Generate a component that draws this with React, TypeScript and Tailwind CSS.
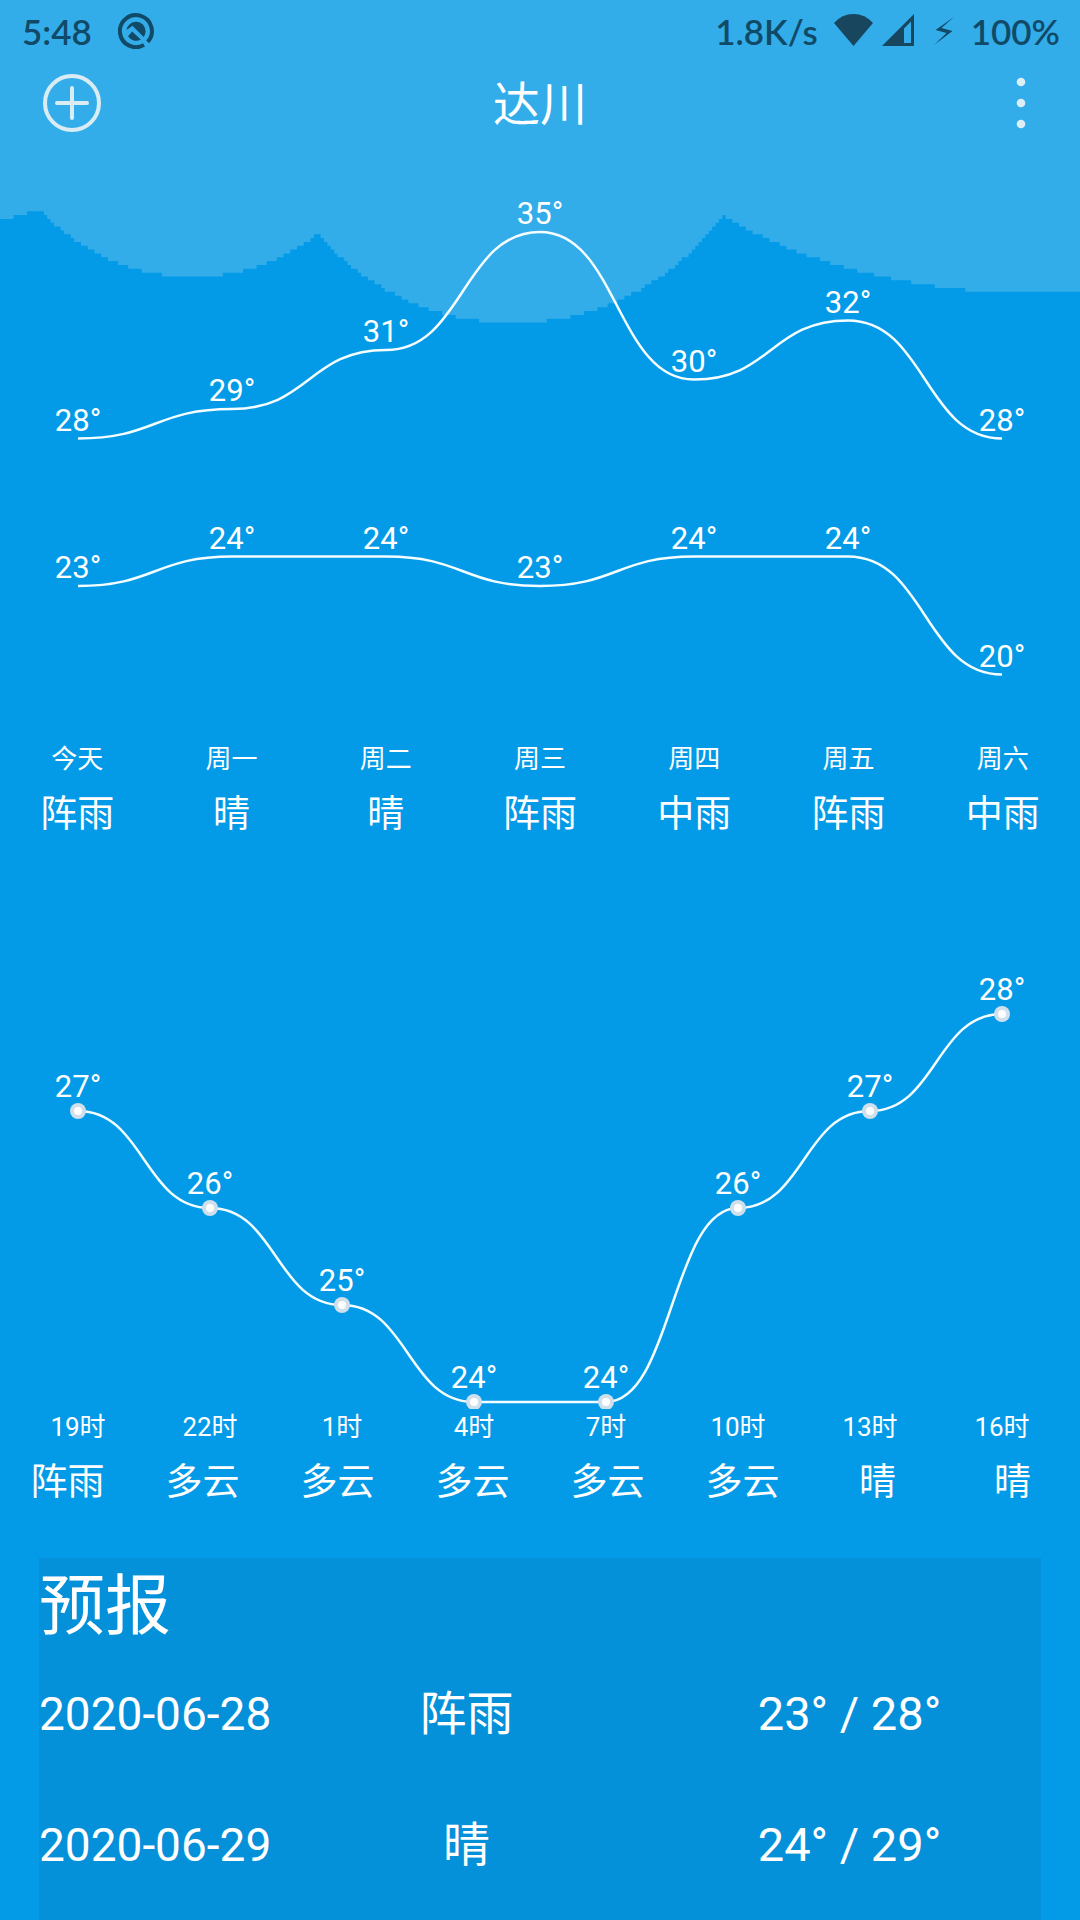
import React from "react";

type Day = { label: string; condition: string; high: number; low: number };
type Hour = { label: string; condition: string; temp: number };
type Point = { x: number; y: number; value: number };

const days: Day[] = [
  { label: "今天", condition: "阵雨", high: 28, low: 23 },
  { label: "周一", condition: "晴", high: 29, low: 24 },
  { label: "周二", condition: "晴", high: 31, low: 24 },
  { label: "周三", condition: "阵雨", high: 35, low: 23 },
  { label: "周四", condition: "中雨", high: 30, low: 24 },
  { label: "周五", condition: "阵雨", high: 32, low: 24 },
  { label: "周六", condition: "中雨", high: 28, low: 20 },
];

const hours: Hour[] = [
  { label: "19时", condition: "阵雨", temp: 27 },
  { label: "22时", condition: "多云", temp: 26 },
  { label: "1时", condition: "多云", temp: 25 },
  { label: "4时", condition: "多云", temp: 24 },
  { label: "7时", condition: "多云", temp: 24 },
  { label: "10时", condition: "多云", temp: 26 },
  { label: "13时", condition: "晴", temp: 27 },
  { label: "16时", condition: "晴", temp: 28 },
];

const forecast = [
  { date: "2020-06-28", condition: "阵雨", range: "23° / 28°" },
  { date: "2020-06-29", condition: "晴", range: "24° / 29°" },
];

/* ---- Cloud backdrop: lower edge sampled on a coarse 320-column grid ---- */

function cloudEdge(x: number): number {
  if (x < 42) return x < 14 ? 219 : x < 27 ? 215 : 211;
  if (x < 319) return 73 + Math.sqrt(204 * 204 - (x - 192) ** 2);
  if (x < 724) return 64 + Math.sqrt(259 * 259 - (x - 513) ** 2);
  const knots = [
    [724, 215], [746, 229], [783, 246], [826, 262], [870, 274],
    [911, 282], [941, 287], [982, 292], [1080, 292],
  ];
  for (let i = 1; i < knots.length; i++) {
    const [x0, y0] = knots[i - 1];
    const [x1, y1] = knots[i];
    if (x <= x1) return y0 + ((y1 - y0) * (x - x0)) / (x1 - x0);
  }
  return 292;
}

function cloudPath(): string {
  let d = "M0 0";
  for (let c = 0; c < 320; c++) {
    const y = Math.round(cloudEdge((c + 0.5) * 3.375) / 3.84);
    d += `V${y}H${c + 1}`;
  }
  return d + "V0Z";
}

function Cloud() {
  return (
    <svg
      className="absolute inset-x-0 top-0 h-96 w-full"
      viewBox="0 0 320 100"
      preserveAspectRatio="none"
      aria-hidden="true"
    >
      <path d={cloudPath()} fill="#33adea" />
    </svg>
  );
}

/* ---- Charts ---- */

function smooth(points: Point[]): string {
  return points
    .map((p, i) => {
      if (i === 0) return `M${p.x} ${p.y}`;
      const q = points[i - 1];
      const mid = (p.x + q.x) / 2;
      return `C${mid} ${q.y} ${mid} ${p.y} ${p.x} ${p.y}`;
    })
    .join("");
}

function Series({ points, dots, gap }: { points: Point[]; dots?: boolean; gap: number }) {
  return (
    <g>
      <path d={smooth(points)} fill="none" stroke="#f4fdff" strokeWidth="2.5" />
      {points.map((p) => (
        <g key={p.x}>
          {dots && <circle cx={p.x} cy={p.y} r="8" fill="#cfdfeb" />}
          {dots && <circle cx={p.x} cy={p.y} r="4" fill="#ffffff" />}
          <text x={p.x} y={p.y - gap} textAnchor="middle" className="fill-white text-[31px]">
            {p.value}°
          </text>
        </g>
      ))}
    </g>
  );
}

function DailyChart() {
  const plot = (key: "high" | "low") =>
    days.map((d, i) => ({ x: 78 + i * 154, y: 86 + (35 - d[key]) * 29.5, value: d[key] }));
  return (
    <svg viewBox="0 0 1080 595" className="block w-full" role="img" aria-label="七日气温">
      <Series points={plot("high")} gap={8} />
      <Series points={plot("low")} gap={8} />
    </svg>
  );
}

function HourlyChart() {
  const points = hours.map((h, i) => ({
    x: 78 + i * 132,
    y: 175 + (28 - h.temp) * 97,
    value: h.temp,
  }));
  return (
    <svg viewBox="0 0 1080 570" className="block w-full" role="img" aria-label="逐时气温">
      <Series points={points} gap={14} dots />
    </svg>
  );
}

/* ---- Status bar and header ---- */

function StatusBar() {
  return (
    <div className="flex h-[62px] items-center justify-between pr-5 pl-[22px] font-[Lato,sans-serif] text-[35px] leading-none font-semibold text-[#114a67]">
      <div className="flex items-center gap-[26px]">
        <span>5:48</span>
        <svg width="36" height="36" viewBox="0 0 36 36" fill="none" aria-hidden="true">
          <path d="M26 31.9A16 16 0 1 1 29.7 28.9" stroke="currentColor" strokeWidth="4" />
          <path d="M8.5 17A9.6 9.6 0 0 1 27.6 18C27.6 20.5 26.8 22.3 25.6 24L14.5 12.7Z" fill="currentColor" />
          <path d="M10 23.2L14.2 18.6L22.8 26.5A9.6 9.6 0 0 1 10 23.2Z" fill="currentColor" />
        </svg>
      </div>
      <div className="flex items-center">
        <span>1.8K/s</span>
        <svg className="ml-4" width="39" height="34" viewBox="0 0 39 34" fill="#17465e" aria-hidden="true">
          <path d="M0 9Q8 0 19.5 0T39 9L19.5 32Z" />
        </svg>
        <svg className="ml-2" width="34" height="34" viewBox="0 0 34 34" fill="#17465e" aria-hidden="true">
          <path fillRule="evenodd" d="M33 0V32H1ZM30 7.5L23 14.5V29H30Z" />
        </svg>
        <svg className="mr-4 ml-4" width="24" height="30" viewBox="0 0 24 30" fill="currentColor" aria-hidden="true">
          <path d="M23 1L4.5 14L15.5 17L3 29L21.5 15L10.5 12Z" />
        </svg>
        <span>100%</span>
      </div>
    </div>
  );
}

function Header() {
  return (
    <header className="grid h-[84px] grid-cols-[60px_1fr_60px] items-center px-[42px]">
      <button type="button" aria-label="添加城市" className="size-[60px]">
        <svg width="60" height="60" viewBox="0 0 60 60" fill="none" stroke="#d9ecf4" strokeLinecap="round">
          <circle cx="30" cy="29" r="27" strokeWidth="4" />
          <path d="M30 14V44M15 29H45" strokeWidth="4" />
        </svg>
      </button>
      <h1 className="text-center text-[47px] leading-none">达川</h1>
      <button type="button" aria-label="更多" className="flex h-[60px] items-center justify-end">
        <svg width="26" height="60" viewBox="0 0 26 60" fill="#dceef6">
          <circle cx="9" cy="8" r="4.3" />
          <circle cx="9" cy="29" r="4.3" />
          <circle cx="9" cy="50" r="4.3" />
        </svg>
      </button>
    </header>
  );
}

export default function App() {
  return (
    <div className="relative flex min-h-screen flex-col bg-[#039be8] font-[Roboto,'Noto_Sans_CJK_SC',sans-serif] text-white" lang="zh-CN">
      <Cloud />
      <div className="relative flex flex-1 flex-col">
        <StatusBar />
        <Header />

        <section>
          <DailyChart />
          <div className="grid grid-cols-7 text-center">
            {days.map((d) => (
              <div key={d.label}>
                <div className="text-[26px] leading-9">{d.label}</div>
                <div className="mt-3.5 text-[37px] leading-12">{d.condition}</div>
              </div>
            ))}
          </div>
        </section>

        <section>
          <HourlyChart />
          <div className="grid grid-cols-8 px-3 text-center text-[26px] leading-9">
            {hours.map((h) => (
              <div key={h.label}>{h.label}</div>
            ))}
          </div>
          <div className="mt-3.5 grid grid-cols-8 text-center text-[37px] leading-12">
            {hours.map((h) => (
              <div key={h.label}>{h.condition}</div>
            ))}
          </div>
        </section>

        <section className="mx-[39px] mt-[51px] flex-1 bg-[#0590da] pt-2">
          <h2 className="text-[66px] leading-[82px]">预报</h2>
          <table className="w-full table-fixed text-[47px] leading-none">
            <tbody>
              {forecast.map((f) => (
                <tr key={f.date} className="h-[131px]">
                  <td className="w-[236px] p-0 text-[46px] whitespace-nowrap">{f.date}</td>
                  <td className="p-0 text-center">{f.condition}</td>
                  <td className="p-0 text-center whitespace-nowrap">{f.range}</td>
                </tr>
              ))}
            </tbody>
          </table>
        </section>
      </div>
    </div>
  );
}
